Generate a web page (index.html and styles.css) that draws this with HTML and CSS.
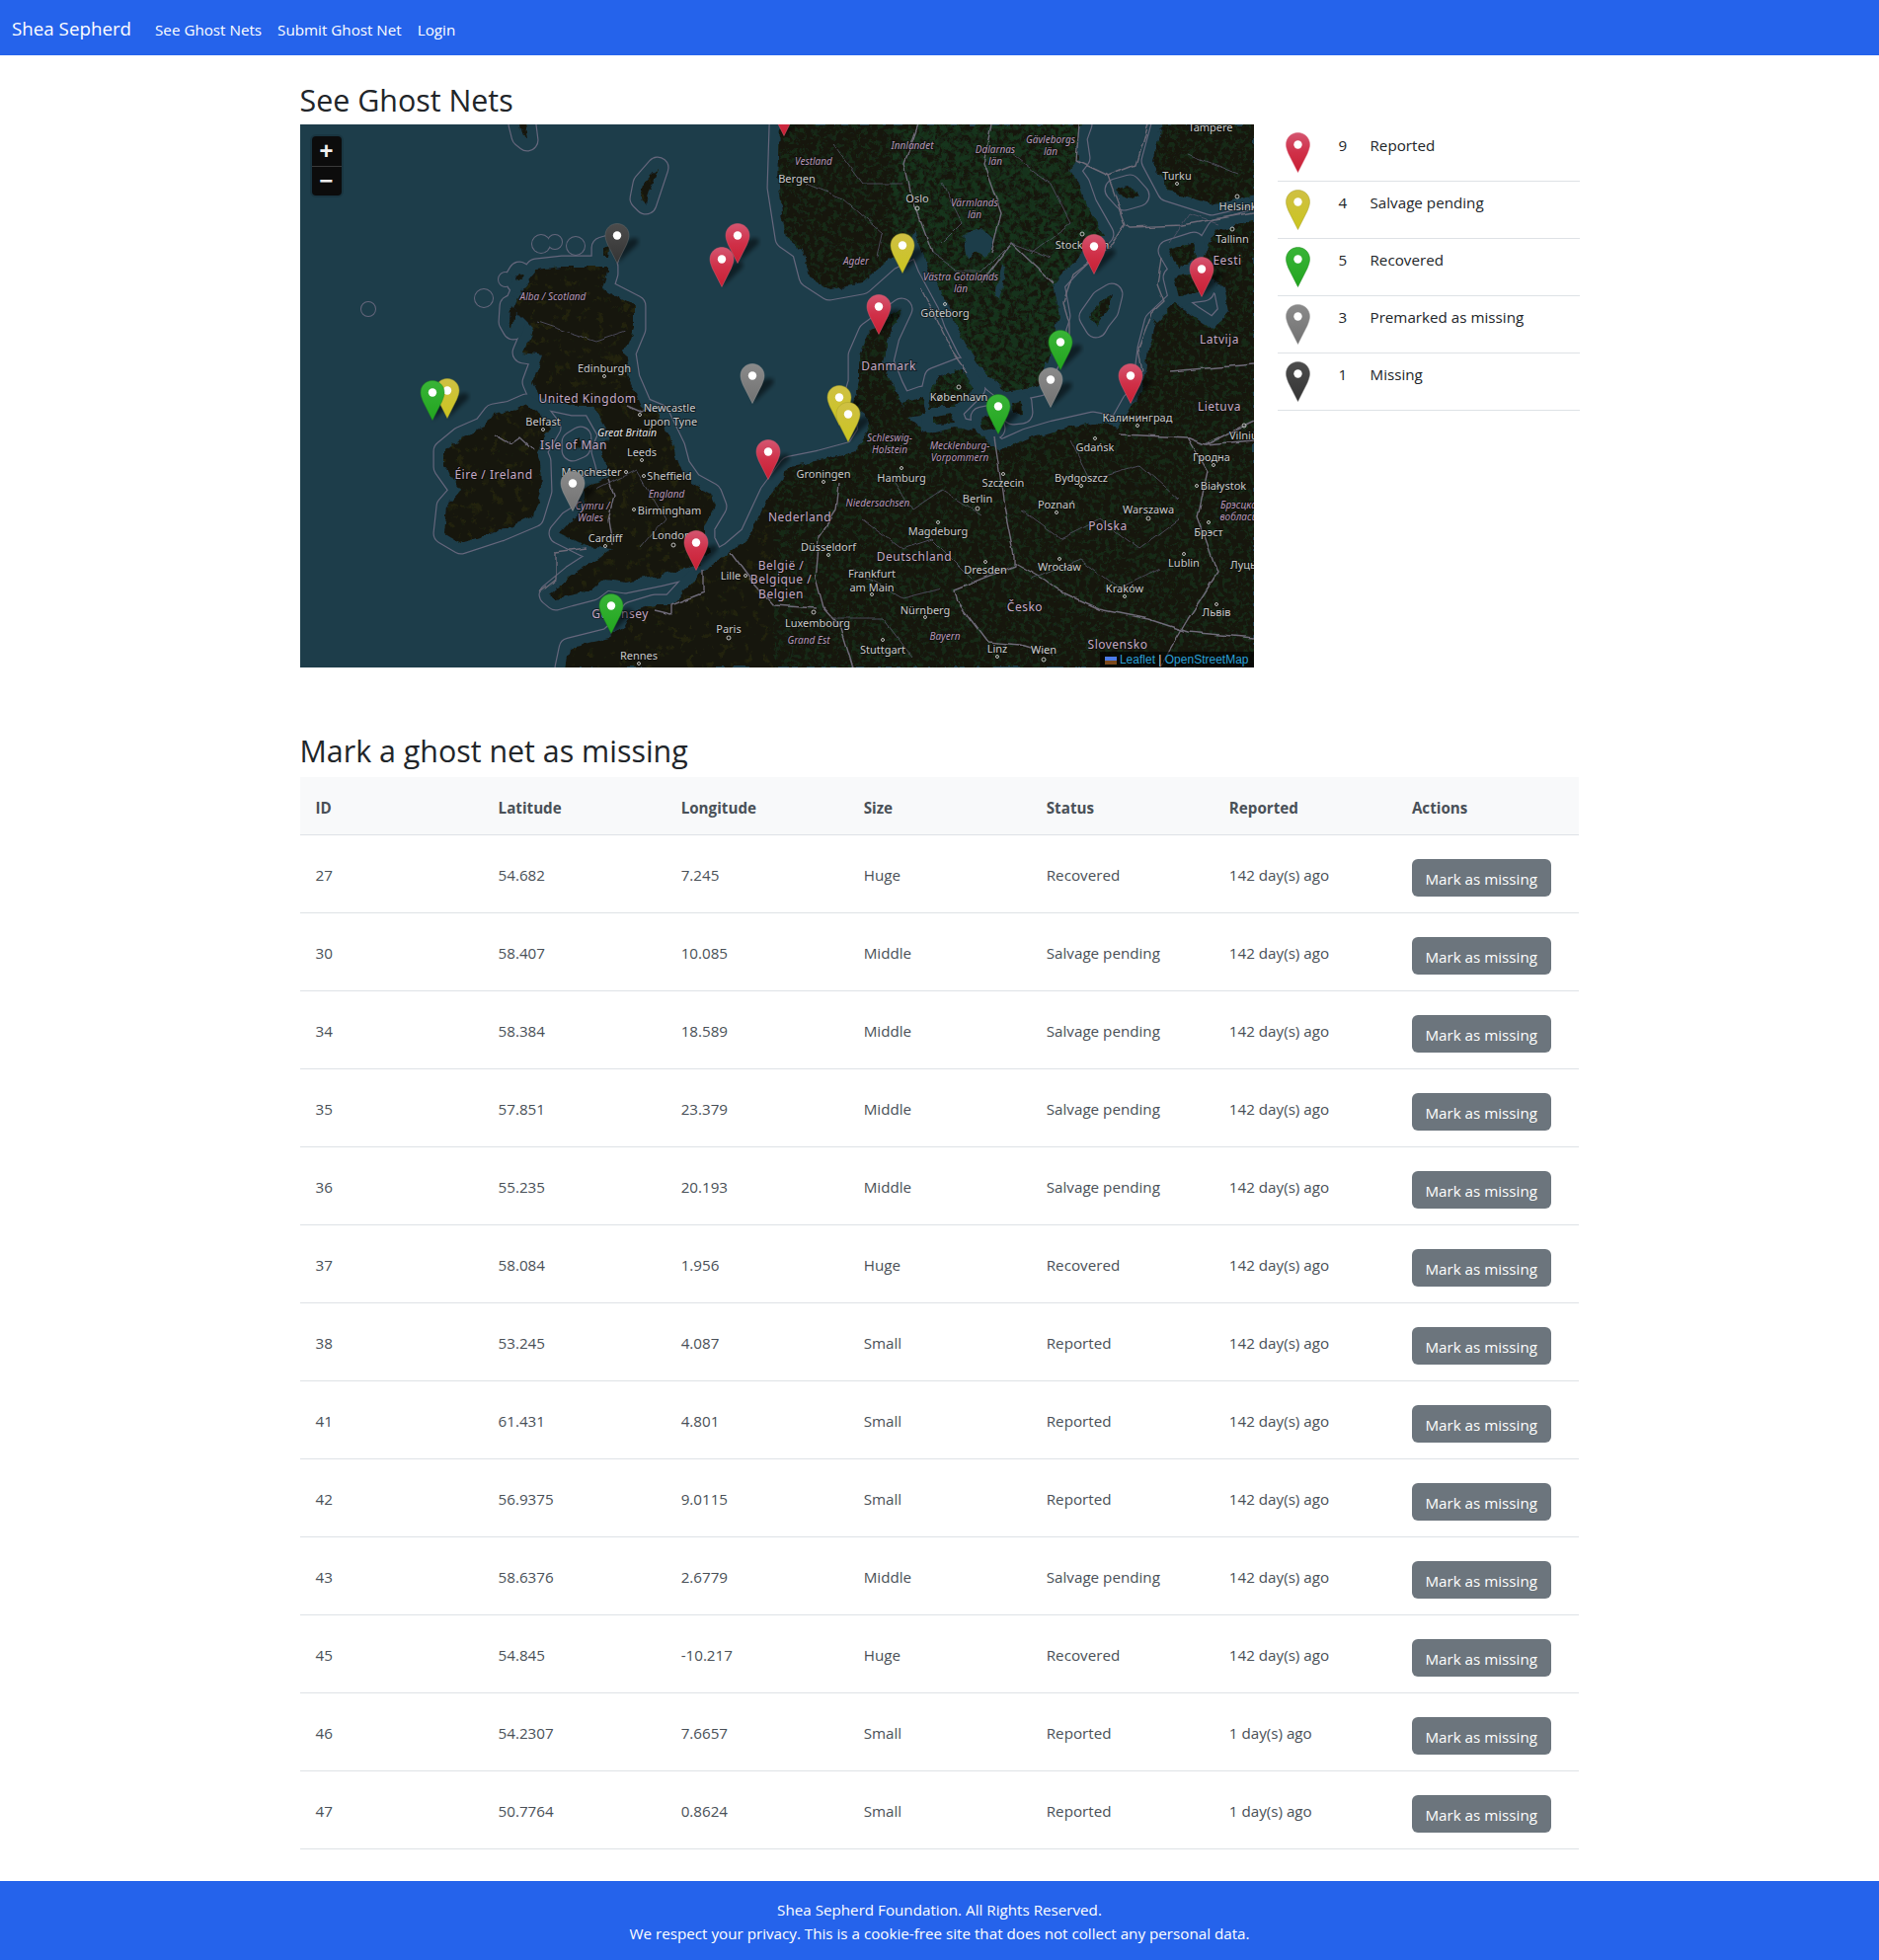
FILE: index.html
```html
<!DOCTYPE html>
<html lang="en">
<head>
  <meta charset="UTF-8">
  <meta name="viewport" content="width=device-width, initial-scale=1.0">
  <title>See Ghost Nets</title>
  <link rel="stylesheet" href="styles.css">
</head>
<body>
  <nav class="navbar">
    <a class="brand" href="#">Shea Sepherd</a>
    <a class="nav-link" href="#">See Ghost Nets</a>
    <a class="nav-link" href="#">Submit Ghost Net</a>
    <a class="nav-link" href="#">Login</a>
  </nav>

  <main class="container">
    <h2 class="first-title">See Ghost Nets</h2>
    <div class="map-row">
      <div class="map">
        <svg class="map-svg" viewBox="0 0 966 550" width="966" height="550">
          <defs>
            <linearGradient id="grad-red" x1="0" y1="0" x2="0" y2="1"><stop offset="0" stop-color="#d45570"/><stop offset="0.5" stop-color="#d03048"/><stop offset="1" stop-color="#c81f33"/></linearGradient>
            <linearGradient id="grad-yellow" x1="0" y1="0" x2="0" y2="1"><stop offset="0" stop-color="#cfc044"/><stop offset="1" stop-color="#cbc51f"/></linearGradient>
            <linearGradient id="grad-green" x1="0" y1="0" x2="0" y2="1"><stop offset="0" stop-color="#39b437"/><stop offset="1" stop-color="#22a51f"/></linearGradient>
            <linearGradient id="grad-grey" x1="0" y1="0" x2="0" y2="1"><stop offset="0" stop-color="#8a8a8a"/><stop offset="1" stop-color="#727272"/></linearGradient>
            <linearGradient id="grad-dark" x1="0" y1="0" x2="0" y2="1"><stop offset="0" stop-color="#4c4c4c"/><stop offset="1" stop-color="#343434"/></linearGradient>

            <filter id="wobble" x="-2%" y="-2%" width="104%" height="104%">
              <feTurbulence type="fractalNoise" baseFrequency="0.09" numOctaves="3" seed="4"/>
              <feDisplacementMap in="SourceGraphic" scale="8" xChannelSelector="R" yChannelSelector="G"/>
            </filter>
            <filter id="wobble-small" x="-2%" y="-2%" width="104%" height="104%">
              <feTurbulence type="fractalNoise" baseFrequency="0.05" numOctaves="2" seed="9"/>
              <feDisplacementMap in="SourceGraphic" scale="6" xChannelSelector="R" yChannelSelector="G"/>
            </filter>
            <filter id="grain-green" x="0" y="0" width="100%" height="100%" color-interpolation-filters="sRGB">
              <feTurbulence type="fractalNoise" baseFrequency="0.2" numOctaves="4" seed="3"/>
              <feColorMatrix values="0 0 0 0 0.1  0 0 0 0 0.2  0 0 0 0 0.1  5 0 0 0 -2.4"/>
            </filter>
            <filter id="grain-sweden" x="0" y="0" width="100%" height="100%" color-interpolation-filters="sRGB">
              <feTurbulence type="fractalNoise" baseFrequency="0.16" numOctaves="4" seed="21"/>
              <feColorMatrix values="0 0 0 0 0.1  0 0 0 0 0.22  0 0 0 0 0.12  5 0 0 0 -2.1"/>
            </filter>
            <filter id="grain-olive" x="0" y="0" width="100%" height="100%" color-interpolation-filters="sRGB">
              <feTurbulence type="fractalNoise" baseFrequency="0.12" numOctaves="3" seed="12"/>
              <feColorMatrix values="0 0 0 0 0.17  0 0 0 0 0.17  0 0 0 0 0.06  6 0 0 0 -3.5"/>
            </filter>
            <filter id="soft"><feGaussianBlur stdDeviation="2"/></filter>

            <g id="land-shapes">
              <path d="M266 144L311 144 311 151 306 167 339 184 339 207 329 231 333 257 346 287 363 294 379 327 384 346 396 363 416 374 421 387 409 407 409 421 414 431 404 447 363 457 329 464 309 461 296 471 273 477 259 481 253 476 276 457 296 444 309 434 316 429 289 427 263 414 273 402 286 394 289 381 286 371 296 364 313 357 309 341 306 331 313 314 296 284 276 284 243 277 236 261 246 234 226 231 236 207 216 187 226 164 239 147Z"/>
              <path d="M229 284L213 291 196 294 186 307 163 317 146 331 146 347 163 371 149 387 146 414 163 424 203 411 236 397 244 371 243 341 239 331 253 307 243 294Z"/>
              <path d="M269 550L273 531 313 521 329 507 336 494 359 487 376 487 413 447 436 434 456 417 476 374 496 347 526 341 563 331 576 311 573 294 559 284 566 261 566 234 576 211 609 187 596 215 590 240 600 265 610 285 616 297 636 314 663 307 683 311 709 331 736 319 763 311 803 302 829 307 843 282 849 277 856 251 859 227 866 200 886 181 905 195 925 208 941 190 936 165 915 150 913 134 929 107 966 97 966 550Z"/>
              <path d="M486 0L484 64 492 115 509 127 516 154 536 167 569 161 596 137 616 127 623 107 629 126 636 144 656 181 663 201 676 227 689 247 703 261 716 271 749 264 759 224 769 194 763 161 779 144 813 111 796 81 789 61 779 47 789 34 786 14 791 0Z"/>
              <path d="M873 0L863 37 879 67 923 81 966 71 966 0Z"/>
              <path d="M880 128L905 120 908 135 890 145Z"/>
              <path d="M885 155L905 150 915 168 900 170 890 175Z"/>
              <path d="M806 205L800 195 812 178 822 172 818 188 810 198Z"/>
              <path d="M763 201L766 215 758 241 754 238Z"/>
              <path d="M643 257L669 247 683 267 663 287 636 287Z"/>
              <path d="M610 283L630 276 634 293 614 296Z"/>
              <path d="M640 296L660 292 664 302 640 303Z"/>
              <path d="M690 297L700 295 703 308 692 310Z"/>
              <path d="M720 283L730 281 731 292 722 293Z"/>
              <path d="M826 66L840 62 849 72 835 76Z"/>
              <path d="M362 44L356 62 350 80 345 75 348 60Z"/>
              <path d="M306 125L313 123 312 135 306 135Z"/>
              <path d="M213 184L219 190 216 207 212 200Z"/>
              <path d="M276 322L284 317 283 327 276 330Z"/>
              <path d="M327 510L331 509 332 514 327 514Z"/>
              <path d="M222 150L226 153 220 160 219 155Z"/>
              <path d="M222 0L228 0 230 16 225 12Z"/>
            </g>
            <mask id="land-mask" maskUnits="userSpaceOnUse" x="0" y="0" width="966" height="550"><use href="#land-shapes" class="mask-white"/></mask>

            <path id="pin-shape" d="M12.5 .5C5.6 .5 .5 5.8 .5 12.5c0 3 1.2 6 2.6 9.5L12.5 40.5 21.9 22c1.4-3.5 2.6-6.5 2.6-9.5C24.5 5.8 19.4 .5 12.5 .5z"/>
            <symbol id="pin-red" viewBox="0 0 25 41" overflow="visible"><use href="#pin-shape" class="pin-red"/><circle class="pin-dot" cx="12.5" cy="12.5" r="4.2"/></symbol>
            <symbol id="pin-yellow" viewBox="0 0 25 41" overflow="visible"><use href="#pin-shape" class="pin-yellow"/><circle class="pin-dot" cx="12.5" cy="12.5" r="4.2"/></symbol>
            <symbol id="pin-green" viewBox="0 0 25 41" overflow="visible"><use href="#pin-shape" class="pin-green"/><circle class="pin-dot" cx="12.5" cy="12.5" r="4.2"/></symbol>
            <symbol id="pin-grey" viewBox="0 0 25 41" overflow="visible"><use href="#pin-shape" class="pin-grey"/><circle class="pin-dot" cx="12.5" cy="12.5" r="4.2"/></symbol>
            <symbol id="pin-dark" viewBox="0 0 25 41" overflow="visible"><use href="#pin-shape" class="pin-dark"/><circle class="pin-dot" cx="12.5" cy="12.5" r="4.2"/></symbol>
            <path id="pin-shadow" class="pin-shadow" d="M0 0L20 -19Q25 -26 16 -26L6 -22Z"/>
          </defs>

          <rect class="water" width="966" height="550"/>

          <!-- sea boundaries: land drawn fat in the line colour, then a little thinner in the water colour -->
          <g class="contour-line"><use href="#land-shapes"/></g>
          <g class="contour-line">
            <circle cx="69" cy="187" r="7"/><circle cx="244" cy="121" r="9"/><circle cx="258" cy="119" r="7"/><circle cx="279" cy="123" r="9"/><circle cx="186" cy="176" r="9"/><circle cx="208" cy="157" r="7"/>
          </g>
          <g class="contour-fill"><use href="#land-shapes"/></g>
          <g class="ring-fill">
            <circle cx="69" cy="187" r="7"/><circle cx="244" cy="121" r="9"/><circle cx="258" cy="119" r="7"/><circle cx="279" cy="123" r="9"/><circle cx="186" cy="176" r="9"/><circle cx="208" cy="157" r="7"/>
          </g>

          <g filter="url(#wobble)">
            <use href="#land-shapes" class="land"/>
            <g mask="url(#land-mask)">
              <rect x="0" y="0" width="480" height="550" filter="url(#grain-olive)" class="grain-west"/>
              <rect x="480" y="0" width="486" height="550" filter="url(#grain-green)" class="grain-east"/>
              <rect x="600" y="0" width="210" height="270" filter="url(#grain-sweden)" class="grain-sweden"/>
            </g>
            <path class="lake" d="M672 111L690 105 703 118 696 134 684 128 676 137Z"/>
            <path class="lake" d="M711 141L716 145 708 177 705 172Z"/>
          </g>

          <g filter="url(#wobble-small)">
            <path class="border" d="M789 0L786 37 818 52 836 101 840 104 893 102 966 89M818 52L846 41 858 0M836 101L823 121 783 151 773 181 779 201 779 214M873 137L869 161 876 179 863 191 849 227 853 251"/>
            <path class="border" d="M629 167L643 194 659 227 676 251M703 317L709 357 713 387 723 437 723 447 663 471 666 484 696 524 729 527 763 537M723 444L753 461 766 471 809 491 859 501 899 514 966 520M829 314L899 317 916 324 966 320M899 317L919 351 909 397 929 454 899 501 870 550"/>
            <path class="border" d="M546 364L543 391 526 417 522 460 530 490 548 510 560 550M436 434L456 461 479 487 522 490M196 314L213 324 223 317 236 329M331 284L345 290 355 284M312 360L318 375 312 400 316 425M409 451L409 474 376 487 376 496 359 492M259 434L259 461 243 474M259 434L289 430M626 0L612 40 620 75 640 130M700 0L692 40 710 90 700 130M763 161L720 120 690 160M916 324L966 300M880 250L966 243"/>
            <path class="border-thin" d="M512 60L550 75 590 110 585 135M540 20L570 60 610 60M640 130L668 150 690 150 720 120 760 135M600 360L620 390 650 370 690 395M570 400L610 430 640 420 680 460M560 450L610 480 650 470M730 390L770 420 810 400 850 430 890 400M740 460L790 440 830 470 870 450M780 320L800 360 850 345 890 380M300 370L340 350 370 400 345 430M240 200L300 220 330 210M650 60L670 100 650 120M720 30L760 60 780 100 740 130M880 120L900 90 930 100M900 30L950 50M540 500L590 500 620 540"/>
          </g>

          <text class="region" x="256" y="178">Alba / Scotland</text>
          <text class="city" x="308" y="251">Edinburgh</text>
          <text class="country" x="291" y="282">United Kingdom</text>
          <text class="city" x="503" y="59">Bergen</text>
          <text class="region" x="620" y="25">Innlandet</text>
          <text class="region" x="704" y="29">Dalarnas</text>
          <text class="region" x="704" y="41">län</text>
          <text class="region" x="760" y="19">Gävleborgs</text>
          <text class="region" x="760" y="31">län</text>
          <text class="region" x="520" y="41">Vestland</text>
          <text class="city" x="922" y="7">Tampere</text>
          <text class="city" x="888" y="56">Turku</text>
          <text class="city" x="951" y="87">Helsinki</text>
          <text class="city" x="944" y="120">Tallinn</text>
          <text class="country" x="939" y="142">Eesti</text>
          <text class="city" x="625" y="79">Oslo</text>
          <text class="region" x="683" y="83">Värmlands</text>
          <text class="region" x="683" y="95">län</text>
          <text class="region" x="563" y="142">Agder</text>
          <text class="region" x="669" y="158">Västra Götalands</text>
          <text class="region" x="669" y="170">län</text>
          <text class="city" x="653" y="195">Göteborg</text>
          <text class="city" x="792" y="126">Stockholm</text>
          <text class="country" x="931" y="222">Latvija</text>
          <text class="country" x="596" y="249">Danmark</text>
          <text class="city" x="667" y="280">København</text>
          <text class="city" x="374" y="291">Newcastle</text>
          <text class="city" x="375" y="305">upon Tyne</text>
          <text class="city" x="246" y="305">Belfast</text>
          <text class="island" x="331" y="316">Great Britain</text>
          <text class="country" x="277" y="329">Isle of Man</text>
          <text class="city" x="346" y="336">Leeds</text>
          <text class="country" x="196" y="359">Éire / Ireland</text>
          <text class="city" x="295" y="356">Manchester</text>
          <text class="city" x="374" y="360">Sheffield</text>
          <text class="region" x="371" y="378">England</text>
          <text class="region" x="296" y="390">Cymru /</text>
          <text class="region" x="294" y="402">Wales</text>
          <text class="city" x="374" y="395">Birmingham</text>
          <text class="city" x="309" y="423">Cardiff</text>
          <text class="city" x="376" y="420">London</text>
          <text class="city" x="436" y="461">Lille</text>
          <text class="country" x="487" y="451">België /</text>
          <text class="country" x="487" y="465">Belgique /</text>
          <text class="country" x="487" y="480">Belgien</text>
          <text class="country" x="324" y="500">Guernsey</text>
          <text class="city" x="434" y="515">Paris</text>
          <text class="city" x="343" y="542">Rennes</text>
          <text class="country" x="506" y="402">Nederland</text>
          <text class="region" x="597" y="321">Schleswig-</text>
          <text class="region" x="597" y="333">Holstein</text>
          <text class="region" x="668" y="329">Mecklenburg-</text>
          <text class="region" x="668" y="341">Vorpommern</text>
          <text class="city" x="848" y="301">Калининград</text>
          <text class="country" x="931" y="290">Lietuva</text>
          <text class="city" x="958" y="319">Vilnius</text>
          <text class="city" x="805" y="331">Gdańsk</text>
          <text class="city" x="923" y="341">Гродна</text>
          <text class="city" x="530" y="358">Groningen</text>
          <text class="city" x="609" y="362">Hamburg</text>
          <text class="city" x="712" y="367">Szczecin</text>
          <text class="city" x="791" y="362">Bydgoszcz</text>
          <text class="city" x="935" y="370">Białystok</text>
          <text class="region" x="953" y="389">Брэсцкая</text>
          <text class="region" x="953" y="401">вобласць</text>
          <text class="region" x="585" y="387">Niedersachsen</text>
          <text class="city" x="686" y="383">Berlin</text>
          <text class="city" x="766" y="389">Poznań</text>
          <text class="city" x="859" y="394">Warszawa</text>
          <text class="country" x="818" y="411">Polska</text>
          <text class="city" x="920" y="417">Брэст</text>
          <text class="city" x="646" y="416">Magdeburg</text>
          <text class="city" x="535" y="432">Düsseldorf</text>
          <text class="country" x="622" y="442">Deutschland</text>
          <text class="city" x="579" y="459">Frankfurt</text>
          <text class="city" x="579" y="473">am Main</text>
          <text class="city" x="694" y="455">Dresden</text>
          <text class="city" x="769" y="452">Wrocław</text>
          <text class="city" x="895" y="448">Lublin</text>
          <text class="city" x="958" y="450">Луцьк</text>
          <text class="city" x="835" y="474">Kraków</text>
          <text class="country" x="734" y="493">Česko</text>
          <text class="city" x="633" y="496">Nürnberg</text>
          <text class="city" x="928" y="498">Львів</text>
          <text class="city" x="524" y="509">Luxembourg</text>
          <text class="region" x="515" y="526">Grand Est</text>
          <text class="region" x="653" y="522">Bayern</text>
          <text class="city" x="590" y="536">Stuttgart</text>
          <text class="city" x="706" y="535">Linz</text>
          <text class="city" x="753" y="536">Wien</text>
          <text class="country" x="828" y="531">Slovensko</text>

          <g class="city-dots">
            <circle cx="625" cy="85" r="2"/><circle cx="308" cy="255" r="1.5"/><circle cx="888" cy="60" r="1.5"/><circle cx="949" cy="73" r="2"/><circle cx="944" cy="106" r="2"/><circle cx="792" cy="111" r="2"/><circle cx="653" cy="182" r="1.5"/><circle cx="667" cy="266" r="2"/><circle cx="344" cy="294" r="1.5"/><circle cx="246" cy="309" r="1.5"/><circle cx="346" cy="340" r="1.5"/><circle cx="330" cy="352" r="1.5"/><circle cx="348" cy="356" r="1.5"/><circle cx="338" cy="390" r="1.5"/><circle cx="309" cy="427" r="1.5"/><circle cx="378" cy="426" r="2"/><circle cx="451" cy="457" r="1.5"/><circle cx="434" cy="520" r="2"/><circle cx="343" cy="546" r="1.5"/><circle cx="805" cy="318" r="1.5"/><circle cx="848" cy="305" r="1.5"/><circle cx="956" cy="305" r="2"/><circle cx="925" cy="345" r="1.5"/><circle cx="530" cy="362" r="1.5"/><circle cx="609" cy="348" r="1.5"/><circle cx="712" cy="354" r="1.5"/><circle cx="791" cy="366" r="1.5"/><circle cx="908" cy="366" r="1.5"/><circle cx="686" cy="389" r="2"/><circle cx="766" cy="393" r="1.5"/><circle cx="859" cy="399" r="2"/><circle cx="920" cy="403" r="1.5"/><circle cx="646" cy="403" r="1.5"/><circle cx="535" cy="436" r="1.5"/><circle cx="579" cy="476" r="1.5"/><circle cx="694" cy="443" r="1.5"/><circle cx="769" cy="440" r="1.5"/><circle cx="895" cy="435" r="1.5"/><circle cx="835" cy="478" r="1.5"/><circle cx="633" cy="499" r="1.5"/><circle cx="928" cy="486" r="1.5"/><circle cx="520" cy="494" r="2"/><circle cx="590" cy="522" r="1.5"/><circle cx="706" cy="539" r="1.5"/><circle cx="753" cy="542" r="2"/>
          </g>

          <g>
            <use href="#pin-shadow" x="490" y="12"/><use href="#pin-shadow" x="443" y="141"/><use href="#pin-shadow" x="427" y="165"/><use href="#pin-shadow" x="586" y="213"/><use href="#pin-shadow" x="804" y="152"/><use href="#pin-shadow" x="913" y="175"/><use href="#pin-shadow" x="841" y="283"/><use href="#pin-shadow" x="474" y="360"/><use href="#pin-shadow" x="401" y="452"/>
            <use href="#pin-shadow" x="149" y="298"/><use href="#pin-shadow" x="610" y="151"/><use href="#pin-shadow" x="546" y="305"/><use href="#pin-shadow" x="555" y="322"/>
            <use href="#pin-shadow" x="134" y="300"/><use href="#pin-shadow" x="770" y="249"/><use href="#pin-shadow" x="707" y="314"/><use href="#pin-shadow" x="315" y="516"/>
            <use href="#pin-shadow" x="458" y="283"/><use href="#pin-shadow" x="760" y="287"/><use href="#pin-shadow" x="276" y="392"/><use href="#pin-shadow" x="321" y="141"/>
          </g>
          <use href="#pin-red" x="477.5" y="-29" width="25" height="41"/>
          <use href="#pin-dark" x="308.5" y="100" width="25" height="41"/>
          <use href="#pin-red" x="430.5" y="100" width="25" height="41"/>
          <use href="#pin-red" x="414.5" y="124" width="25" height="41"/>
          <use href="#pin-yellow" x="597.5" y="110" width="25" height="41"/>
          <use href="#pin-red" x="791.5" y="111" width="25" height="41"/>
          <use href="#pin-red" x="900.5" y="134" width="25" height="41"/>
          <use href="#pin-red" x="573.5" y="172" width="25" height="41"/>
          <use href="#pin-green" x="757.5" y="208" width="25" height="41"/>
          <use href="#pin-grey" x="445.5" y="242" width="25" height="41"/>
          <use href="#pin-red" x="828.5" y="242" width="25" height="41"/>
          <use href="#pin-grey" x="747.5" y="246" width="25" height="41"/>
          <use href="#pin-yellow" x="136.5" y="257" width="25" height="41"/>
          <use href="#pin-green" x="121.5" y="259" width="25" height="41"/>
          <use href="#pin-yellow" x="533.5" y="264" width="25" height="41"/>
          <use href="#pin-green" x="694.5" y="273" width="25" height="41"/>
          <use href="#pin-yellow" x="542.5" y="281" width="25" height="41"/>
          <use href="#pin-red" x="461.5" y="319" width="25" height="41"/>
          <use href="#pin-grey" x="263.5" y="351" width="25" height="41"/>
          <use href="#pin-red" x="388.5" y="411" width="25" height="41"/>
          <use href="#pin-green" x="302.5" y="475" width="25" height="41"/>
        </svg>

        <div class="zoom-control">
          <a class="zoom-btn" href="#">+</a>
          <a class="zoom-btn" href="#">−</a>
        </div>
        <div class="attribution">
          <svg class="flag" viewBox="0 0 12 8" width="12" height="8"><rect class="flag-top" width="12" height="4"/><rect class="flag-bottom" y="4" width="12" height="4"/></svg>
          <a href="#">Leaflet</a> <span class="attr-sep">|</span> <a href="#">OpenStreetMap</a>
        </div>
      </div>

      <table class="legend">
        <tr>
          <td><svg class="legend-pin" width="25" height="41"><use href="#pin-red" width="25" height="41"/></svg></td>
          <td>9</td>
          <td>Reported</td>
        </tr>
        <tr>
          <td><svg class="legend-pin" width="25" height="41"><use href="#pin-yellow" width="25" height="41"/></svg></td>
          <td>4</td>
          <td>Salvage pending</td>
        </tr>
        <tr>
          <td><svg class="legend-pin" width="25" height="41"><use href="#pin-green" width="25" height="41"/></svg></td>
          <td>5</td>
          <td>Recovered</td>
        </tr>
        <tr>
          <td><svg class="legend-pin" width="25" height="41"><use href="#pin-grey" width="25" height="41"/></svg></td>
          <td>3</td>
          <td>Premarked as missing</td>
        </tr>
        <tr>
          <td><svg class="legend-pin" width="25" height="41"><use href="#pin-dark" width="25" height="41"/></svg></td>
          <td>1</td>
          <td>Missing</td>
        </tr>
      </table>
    </div>

    <h2 class="second-title">Mark a ghost net as missing</h2>
    <table class="nets">
      <thead>
        <tr><th>ID</th><th>Latitude</th><th>Longitude</th><th>Size</th><th>Status</th><th>Reported</th><th>Actions</th></tr>
      </thead>
      <tbody>
        <tr><td>27</td><td>54.682</td><td>7.245</td><td>Huge</td><td>Recovered</td><td>142 day(s) ago</td><td><button class="btn">Mark as missing</button></td></tr>
        <tr><td>30</td><td>58.407</td><td>10.085</td><td>Middle</td><td>Salvage pending</td><td>142 day(s) ago</td><td><button class="btn">Mark as missing</button></td></tr>
        <tr><td>34</td><td>58.384</td><td>18.589</td><td>Middle</td><td>Salvage pending</td><td>142 day(s) ago</td><td><button class="btn">Mark as missing</button></td></tr>
        <tr><td>35</td><td>57.851</td><td>23.379</td><td>Middle</td><td>Salvage pending</td><td>142 day(s) ago</td><td><button class="btn">Mark as missing</button></td></tr>
        <tr><td>36</td><td>55.235</td><td>20.193</td><td>Middle</td><td>Salvage pending</td><td>142 day(s) ago</td><td><button class="btn">Mark as missing</button></td></tr>
        <tr><td>37</td><td>58.084</td><td>1.956</td><td>Huge</td><td>Recovered</td><td>142 day(s) ago</td><td><button class="btn">Mark as missing</button></td></tr>
        <tr><td>38</td><td>53.245</td><td>4.087</td><td>Small</td><td>Reported</td><td>142 day(s) ago</td><td><button class="btn">Mark as missing</button></td></tr>
        <tr><td>41</td><td>61.431</td><td>4.801</td><td>Small</td><td>Reported</td><td>142 day(s) ago</td><td><button class="btn">Mark as missing</button></td></tr>
        <tr><td>42</td><td>56.9375</td><td>9.0115</td><td>Small</td><td>Reported</td><td>142 day(s) ago</td><td><button class="btn">Mark as missing</button></td></tr>
        <tr><td>43</td><td>58.6376</td><td>2.6779</td><td>Middle</td><td>Salvage pending</td><td>142 day(s) ago</td><td><button class="btn">Mark as missing</button></td></tr>
        <tr><td>45</td><td>54.845</td><td>-10.217</td><td>Huge</td><td>Recovered</td><td>142 day(s) ago</td><td><button class="btn">Mark as missing</button></td></tr>
        <tr><td>46</td><td>54.2307</td><td>7.6657</td><td>Small</td><td>Reported</td><td>1 day(s) ago</td><td><button class="btn">Mark as missing</button></td></tr>
        <tr><td>47</td><td>50.7764</td><td>0.8624</td><td>Small</td><td>Reported</td><td>1 day(s) ago</td><td><button class="btn">Mark as missing</button></td></tr>
      </tbody>
    </table>
  </main>

  <footer class="footer">
    <div>Shea Sepherd Foundation. All Rights Reserved.</div>
    <div>We respect your privacy. This is a cookie-free site that does not collect any personal data.</div>
  </footer>
</body>
</html>
```

FILE: styles.css
```css
/* Page */
body {
  margin: 0;
  font-family: "Open Sans", "Noto Sans", sans-serif;
  font-size: 15.2px;
  line-height: 24px;
  color: #212529;
  background-color: #fff;
}

a {
  text-decoration: none;
}

/* Top bar */
.navbar {
  display: flex;
  align-items: center;
  height: 56px;
  padding: 0 12px;
  background-color: #2563eb;
}

.brand {
  margin-right: 16px;
  padding-top: 1px;
  font-size: 18.75px;
  color: #fff;
}

.nav-link {
  padding: 9px 8px 6px;
  color: #fff;
}

/* Content */
.container {
  width: 1296px;
  margin: 0 auto;
}

h2 {
  margin: 0 0 5px;
  font-size: 30.4px;
  font-weight: 400;
  line-height: 38px;
}

.first-title {
  padding-top: 27px;
}

.second-title {
  margin-top: 66px;
  margin-bottom: 7px;
}

.map-row {
  display: flex;
  gap: 24px;
}

/* Map */
.map {
  position: relative;
  width: 966px;
  height: 550px;
  overflow: hidden;
  flex: none;
}

.map-svg {
  display: block;
}

.water { fill: #1d3d4a; }
.land { fill: #16170f; }
.lake { fill: #1d3d4a; }
.mask-white { fill: #fff; }

.grain-west { opacity: 0.7; }
.grain-east { opacity: 0.75; }
.grain-sweden { opacity: 0.85; }

.contour-line {
  fill: #66677c;
  stroke: #66677c;
  stroke-width: 23;
  stroke-linejoin: round;
}

.contour-line circle {
  stroke-width: 2;
}

.contour-fill {
  fill: #1d3d4a;
  stroke: #1d3d4a;
  stroke-width: 20.6;
  stroke-linejoin: round;
}

.ring-fill {
  fill: #1d3d4a;
}

.border {
  fill: none;
  stroke: #6e6a78;
  stroke-width: 1.4;
  stroke-linejoin: round;
}

.border-thin {
  fill: none;
  stroke: #57566a;
  stroke-width: 0.8;
}

.map-svg text {
  font-family: "Noto Sans", "Open Sans", sans-serif;
  text-anchor: middle;
  paint-order: stroke;
  stroke: rgba(10, 10, 10, 0.55);
  stroke-width: 2px;
}

.city {
  font-size: 11px;
  fill: #c9c9c9;
}

.country {
  font-size: 12px;
  letter-spacing: 0.5px;
  fill: #c4a9c4;
}

.region {
  font-size: 10px;
  font-style: italic;
  fill: #b596b6;
}

.island {
  font-size: 10.5px;
  font-style: italic;
  fill: #e6e6e6;
}

.city-dots circle {
  fill: none;
  stroke: #bdbdbd;
  stroke-width: 1;
}

.pin-red { fill: url(#grad-red); stroke: #d85a70; stroke-width: 1; stroke-opacity: 0.5; }
.pin-yellow { fill: url(#grad-yellow); stroke: #a89f28; stroke-width: 1; stroke-opacity: 0.5; }
.pin-green { fill: url(#grad-green); stroke: #1d8a1b; stroke-width: 1; stroke-opacity: 0.5; }
.pin-grey { fill: url(#grad-grey); stroke: #9a9a9a; stroke-width: 1; stroke-opacity: 0.5; }
.pin-dark { fill: url(#grad-dark); stroke: #6a6a6a; stroke-width: 1; stroke-opacity: 0.5; }
.pin-dot { fill: #fff; }
.pin-shadow { fill: rgba(0, 0, 0, 0.5); filter: url(#soft); }

.zoom-control {
  position: absolute;
  top: 12px;
  left: 12px;
  display: flex;
  flex-direction: column;
  width: 30px;
  border-radius: 4px;
  overflow: hidden;
  box-shadow: 0 0 0 2px rgba(0, 0, 0, 0.12);
}

.zoom-btn {
  display: block;
  height: 30px;
  font-family: "Liberation Mono", monospace;
  font-size: 24px;
  font-weight: 700;
  line-height: 33px;
  text-align: center;
  color: #f0f0f0;
  background-color: #0c0c0c;
}

.zoom-btn + .zoom-btn {
  border-top: 1px solid #3a3a3a;
  height: 29px;
  line-height: 31px;
}

.attribution {
  position: absolute;
  right: 0;
  bottom: 0;
  padding: 0 5px;
  font-family: "Liberation Sans", sans-serif;
  font-size: 12px;
  line-height: 16px;
  color: #ddd;
  background-color: rgba(0, 0, 0, 0.6);
}

.attribution a {
  color: #2a9fd6;
}

.flag { vertical-align: -1px; }
.flag-top { fill: #4c7be8; }
.flag-bottom { fill: #7c4a1e; }

/* Legend next to the map */
.legend {
  width: 306px;
  height: 290px;
  border-collapse: collapse;
  align-self: flex-start;
}

.legend td {
  padding: 9px 8px 7px;
  border-bottom: 1px solid #dee2e6;
  vertical-align: top;
}

.legend td:first-child {
  width: 38px;
  padding-top: 8px;
  padding-bottom: 8px;
}

.legend td:nth-child(2) { width: 16px; }

.legend-pin {
  display: block;
}

/* Table */
.nets {
  width: 1295.5px;
  border-collapse: collapse;
  table-layout: fixed;
  color: #495057;
}

.nets th {
  padding: 19px 16px 15px;
  text-align: left;
  font-weight: 700;
  background-color: #f8f9fa;
  border-bottom: 1px solid #dee2e6;
}

.nets td {
  padding: 17px 16px 15px;
  border-bottom: 1px solid #dee2e6;
  vertical-align: middle;
}

.nets td:last-child {
  padding: 16px;
}

.btn {
  display: block;
  height: 38px;
  margin-top: 8px;
  padding: 2px 13.5px 0;
  font: inherit;
  color: #fff;
  background-color: #6c757d;
  border: none;
  border-radius: 6px;
  cursor: pointer;
}

/* Footer */
.footer {
  margin-top: 32px;
  padding: 17px 12px 15px;
  text-align: center;
  color: #fff;
  background-color: #2563eb;
}
```
